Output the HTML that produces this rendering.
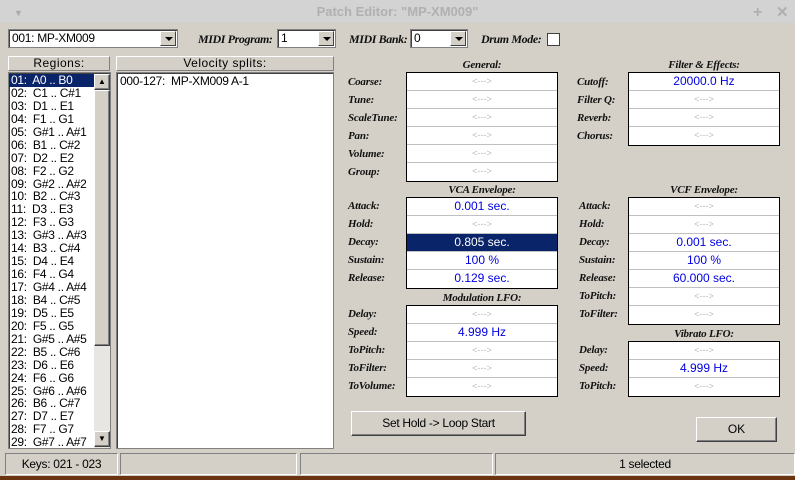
<!DOCTYPE html>
<html><head><style>
*{box-sizing:border-box;margin:0;padding:0}
body{width:795px;height:480px;background:#d4d0c8;position:relative;overflow:hidden;font-family:"Liberation Sans",sans-serif;font-size:12px}
.a{position:absolute}
.tb{left:0;top:0;width:795px;height:23px;background:#d3d3d3;color:#b0b0b0;font-weight:bold;font-size:13px;text-align:center;line-height:23px}
.combo{background:#fff;border:1px solid #808080;box-shadow:inset 1px 1px 0 #404040;height:19px;line-height:17px;padding-left:3px;font-size:12px;letter-spacing:-0.3px}
.dd{position:absolute;right:1px;top:1px;width:16px;height:15px;background:#d4d0c8;border:1px solid;border-color:#fff #404040 #404040 #fff}
.dd:after{content:"";position:absolute;left:4px;top:5px;border:4px solid transparent;border-top:4px solid #000;border-bottom:0}
.lab{font-family:"Liberation Serif",serif;font-style:italic;font-weight:bold;font-size:11px;color:#111;letter-spacing:-0.2px}
.hdr{background:#d4d0c8;border:1px solid;border-color:#fff #808080 #808080 #fff;text-align:center;font-size:12px;line-height:13px;height:15px;letter-spacing:0.5px}
.list{background:#fff;border:1px solid #808080;box-shadow:inset 1px 1px 0 #404040}
.box{background:#fff;border:1px solid #000}
.box div{height:18px;border-bottom:1px solid #c0c0c0;text-align:center;line-height:17px;color:#0000e0;font-size:12px}
.box div:last-child{border-bottom:0}
.box div.e{color:#bbb;font-size:9px}
.box div.s{background:#0a246a;color:#fff}
.btn{background:#d4d0c8;border:1px solid;border-color:#fff #404040 #404040 #fff;box-shadow:inset -1px -1px 0 #808080;text-align:center;font-size:12px}
.sb{top:453px;height:22px;border:1px solid;border-color:#808080 #fff #fff #808080;text-align:center;line-height:20px;font-size:12px;letter-spacing:-0.3px}
.r div{height:12.95px;line-height:13px;padding-left:2px;font-size:12px;letter-spacing:-0.3px;white-space:nowrap}
</style></head><body>
<div class="a tb">Patch Editor: "MP-XM009"</div>
<div class="a" style="left:14px;top:8px;color:#aaa;font-size:9px">▼</div>
<div class="a" style="left:152px;top:4px;color:#b0b0b0;font-size:16px;font-weight:bold;left:753px">+</div>
<div class="a" style="left:776px;top:3px;color:#b0b0b0;font-size:15px;font-weight:bold">✕</div>

<div class="a combo" style="left:8px;top:29px;width:170px">001: MP-XM009<span class="dd"></span></div>
<div class="a lab" style="left:198px;top:32px;font-size:12px;letter-spacing:-0.4px">MIDI Program:</div>
<div class="a combo" style="left:277px;top:29px;width:59px">1<span class="dd"></span></div>
<div class="a lab" style="left:349px;top:32px;font-size:12px;letter-spacing:-0.4px">MIDI Bank:</div>
<div class="a combo" style="left:410px;top:29px;width:58px">0<span class="dd"></span></div>
<div class="a lab" style="left:481px;top:32px;font-size:12px;letter-spacing:-0.4px">Drum Mode:</div>
<div class="a" style="left:547px;top:33px;width:13px;height:13px;background:#fff;border:1px solid #404040"></div>

<div class="a hdr" style="left:8px;top:56px;width:102px">Regions:</div>
<div class="a hdr" style="left:116px;top:56px;width:218px">Velocity splits:</div>
<div class="a list r" style="left:8px;top:72px;width:103px;height:377px;padding-top:1px;overflow:hidden">
<div style="background:#0a246a;color:#fff;width:85px">01:&nbsp; A0 .. B0</div><div>02:&nbsp; C1 .. C#1</div><div>03:&nbsp; D1 .. E1</div><div>04:&nbsp; F1 .. G1</div><div>05:&nbsp; G#1 .. A#1</div><div>06:&nbsp; B1 .. C#2</div><div>07:&nbsp; D2 .. E2</div><div>08:&nbsp; F2 .. G2</div><div>09:&nbsp; G#2 .. A#2</div><div>10:&nbsp; B2 .. C#3</div><div>11:&nbsp; D3 .. E3</div><div>12:&nbsp; F3 .. G3</div><div>13:&nbsp; G#3 .. A#3</div><div>14:&nbsp; B3 .. C#4</div><div>15:&nbsp; D4 .. E4</div><div>16:&nbsp; F4 .. G4</div><div>17:&nbsp; G#4 .. A#4</div><div>18:&nbsp; B4 .. C#5</div><div>19:&nbsp; D5 .. E5</div><div>20:&nbsp; F5 .. G5</div><div>21:&nbsp; G#5 .. A#5</div><div>22:&nbsp; B5 .. C#6</div><div>23:&nbsp; D6 .. E6</div><div>24:&nbsp; F6 .. G6</div><div>25:&nbsp; G#6 .. A#6</div><div>26:&nbsp; B6 .. C#7</div><div>27:&nbsp; D7 .. E7</div><div>28:&nbsp; F7 .. G7</div><div>29:&nbsp; G#7 .. A#7</div>
</div>
<div class="a" style="left:94px;top:74px;width:16px;height:374px;background:#e8e6e2"></div>
<div class="a btn" style="left:94px;top:74px;width:16px;height:16px;font-size:8px;line-height:14px">▲</div>
<div class="a btn" style="left:94px;top:90px;width:16px;height:256px"></div>
<div class="a btn" style="left:94px;top:431px;width:16px;height:16px;font-size:8px;line-height:14px">▼</div>
<div class="a list" style="left:116px;top:72px;width:218px;height:377px;padding:1px 3px;letter-spacing:-0.3px">000-127:&nbsp; MP-XM009 A-1</div>

<div class="a lab" style="left:406px;top:59px;width:152px;text-align:center">General:</div>
<div class="a lab" style="left:628px;top:59px;width:152px;text-align:center">Filter &amp; Effects:</div>
<div class="a lab" style="left:348px;top:73px;line-height:18px">Coarse:<br>Tune:<br>ScaleTune:<br>Pan:<br>Volume:<br>Group:</div>
<div class="a box" style="left:406px;top:72px;width:152px"><div class="e">&lt;---&gt;</div><div class="e">&lt;---&gt;</div><div class="e">&lt;---&gt;</div><div class="e">&lt;---&gt;</div><div class="e">&lt;---&gt;</div><div class="e">&lt;---&gt;</div></div>
<div class="a lab" style="left:577px;top:73px;line-height:18px">Cutoff:<br>Filter Q:<br>Reverb:<br>Chorus:</div>
<div class="a box" style="left:628px;top:72px;width:152px"><div>20000.0 Hz</div><div class="e">&lt;---&gt;</div><div class="e">&lt;---&gt;</div><div class="e">&lt;---&gt;</div></div>

<div class="a lab" style="left:406px;top:184px;width:152px;text-align:center">VCA Envelope:</div>
<div class="a lab" style="left:628px;top:184px;width:152px;text-align:center">VCF Envelope:</div>
<div class="a lab" style="left:348px;top:197px;line-height:18px">Attack:<br>Hold:<br>Decay:<br>Sustain:<br>Release:</div>
<div class="a box" style="left:406px;top:197px;width:152px"><div>0.001 sec.</div><div class="e">&lt;---&gt;</div><div class="s">0.805 sec.</div><div>100 %</div><div>0.129 sec.</div></div>
<div class="a lab" style="left:579px;top:197px;line-height:18px">Attack:<br>Hold:<br>Decay:<br>Sustain:<br>Release:<br>ToPitch:<br>ToFilter:</div>
<div class="a box" style="left:628px;top:197px;width:152px"><div class="e">&lt;---&gt;</div><div class="e">&lt;---&gt;</div><div>0.001 sec.</div><div>100 %</div><div>60.000 sec.</div><div class="e">&lt;---&gt;</div><div class="e">&lt;---&gt;</div></div>

<div class="a lab" style="left:406px;top:292px;width:152px;text-align:center">Modulation LFO:</div>
<div class="a lab" style="left:348px;top:305px;line-height:18px">Delay:<br>Speed:<br>ToPitch:<br>ToFilter:<br>ToVolume:</div>
<div class="a box" style="left:406px;top:305px;width:152px"><div class="e">&lt;---&gt;</div><div>4.999 Hz</div><div class="e">&lt;---&gt;</div><div class="e">&lt;---&gt;</div><div class="e">&lt;---&gt;</div></div>
<div class="a lab" style="left:628px;top:328px;width:152px;text-align:center">Vibrato LFO:</div>
<div class="a lab" style="left:579px;top:341px;line-height:18px">Delay:<br>Speed:<br>ToPitch:</div>
<div class="a box" style="left:628px;top:341px;width:152px"><div class="e">&lt;---&gt;</div><div>4.999 Hz</div><div class="e">&lt;---&gt;</div></div>

<div class="a btn" style="left:351px;top:411px;width:175px;height:25px;line-height:22px;letter-spacing:-0.3px">Set Hold -&gt; Loop Start</div>
<div class="a btn" style="left:696px;top:417px;width:81px;height:25px;line-height:22px">OK</div>

<div class="a sb" style="left:5px;width:113px">Keys: 021 - 023</div>
<div class="a sb" style="left:120px;width:177px"></div>
<div class="a sb" style="left:300px;width:193px"></div>
<div class="a sb" style="left:495px;width:300px">1 selected</div>
<div class="a" style="left:0;top:476px;width:795px;height:4px;background:#6b3410"></div>
</body></html>
